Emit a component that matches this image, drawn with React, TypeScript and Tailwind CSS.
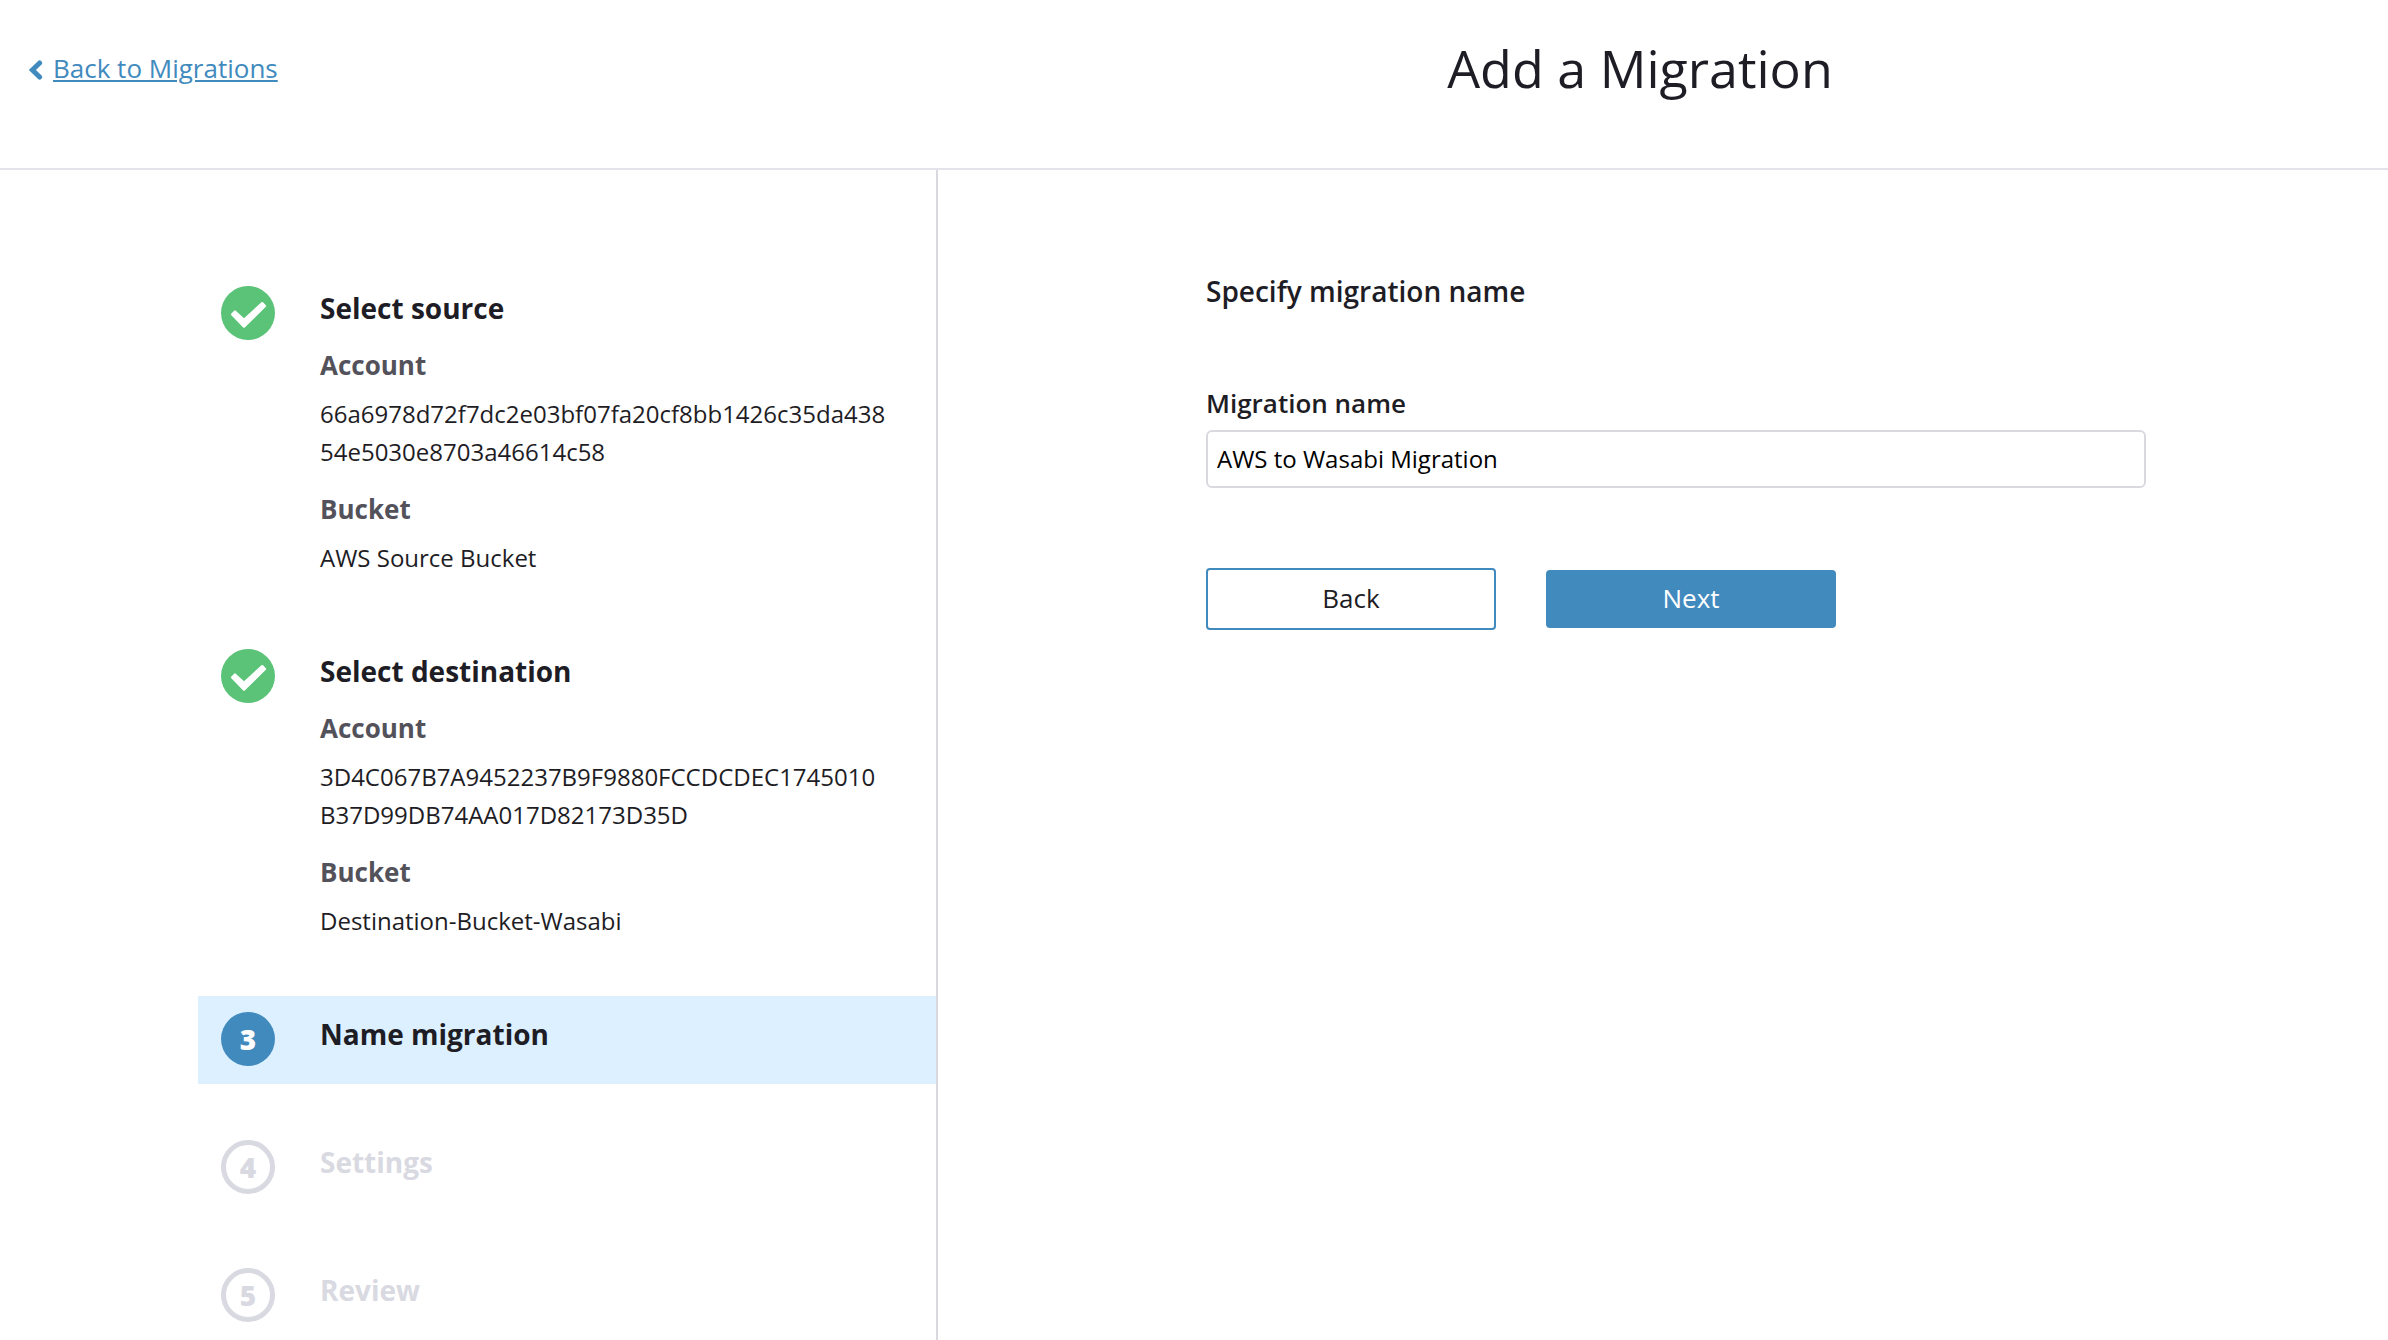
import React, { useState } from 'react';

interface Detail {
  label: string;
  value: string;
}

interface Step {
  number: number;
  title: string;
  status: 'done' | 'current' | 'upcoming';
  details?: Detail[];
}

const steps: Step[] = [
  {
    number: 1,
    title: 'Select source',
    status: 'done',
    details: [
      { label: 'Account', value: '66a6978d72f7dc2e03bf07fa20cf8bb1426c35da43854e5030e8703a46614c58' },
      { label: 'Bucket', value: 'AWS Source Bucket' }
    ]
  },
  {
    number: 2,
    title: 'Select destination',
    status: 'done',
    details: [
      { label: 'Account', value: '3D4C067B7A9452237B9F9880FCCDCDEC1745010B37D99DB74AA017D82173D35D' },
      { label: 'Bucket', value: 'Destination-Bucket-Wasabi' }
    ]
  },
  { number: 3, title: 'Name migration', status: 'current' },
  { number: 4, title: 'Settings', status: 'upcoming' },
  { number: 5, title: 'Review', status: 'upcoming' }
];

const badgeStyles = {
  done: 'bg-[#5bc378] text-white',
  current: 'bg-[#418abe] text-white',
  upcoming: 'border-[5px] border-[#d9d9e2] text-[#d9d9e2]'
};

const StepBadge: React.FC<{ step: Step }> = ({ step }) => (
  <div
    className={`flex h-[54px] w-[54px] shrink-0 items-center justify-center rounded-full text-[28px] leading-none font-extrabold ${badgeStyles[step.status]}`}
  >
    {step.status === 'done' ? (
      <svg viewBox="0 0 54 54" className="h-full w-full" fill="currentColor" aria-label="Completed">
        <path
          d="M11.2 28.4 L14 25.6 L23 33.9 L41.2 17.2 L44 20 L23 40.6 Z"
          stroke="currentColor"
          strokeWidth="2.4"
          strokeLinejoin="round"
        />
      </svg>
    ) : (
      step.number
    )}
  </div>
);

const StepItem: React.FC<{ step: Step }> = ({ step }) => (
  <li
    className={`flex min-h-[88px] gap-[45px] pt-4 pr-12 pl-[23px] ${step.status === 'current' ? 'bg-[#dcf0ff]' : ''}`}
  >
    <StepBadge step={step} />
    <div className="min-w-0 flex-1">
      <h2
        className={`text-[28px] leading-[44px] font-bold ${step.status === 'upcoming' ? 'text-[#d9d9e2]' : ''}`}
      >
        {step.title}
      </h2>
      {step.details && (
        <dl className="flex flex-col gap-[19px] pt-4 pb-4">
          {step.details.map(detail => (
            <div key={detail.label}>
              <dt className="text-[26px] leading-[38px] font-bold text-[#53525b]">{detail.label}</dt>
              <dd className="mt-[11px] text-[24px] leading-[38px] break-all">{detail.value}</dd>
            </div>
          ))}
        </dl>
      )}
    </div>
  </li>
);

export default function App() {
  const [name, setName] = useState('AWS to Wasabi Migration');

  const handleSubmit = (e: React.FormEvent) => {
    e.preventDefault();
  };

  return (
    <div className="flex min-h-screen flex-col bg-white font-['Open_Sans',sans-serif] text-[#1e1d25]">
      <header className="grid grid-cols-[892fr_1496fr] items-center border-b-2 border-[#e4e3eb] pt-8 pb-16">
        <div className="pl-7">
          <a href="#migrations" className="inline-flex items-center gap-2 text-[26px] leading-[38px] text-[#418abe]">
            <svg viewBox="0 0 17 20" className="mt-1 h-5 w-[17px]" fill="none" aria-hidden="true">
              <path
                d="M11.6 3 L4.4 10 L11.6 17"
                stroke="currentColor"
                strokeWidth="5"
                strokeLinecap="round"
                strokeLinejoin="miter"
              />
            </svg>
            <span className="underline">Back to Migrations</span>
          </a>
        </div>
        <h1 className="text-center text-[52px] leading-[72px]">Add a Migration</h1>
      </header>

      <div className="grid flex-1 grid-cols-[938fr_1450fr]">
        <aside className="border-r-2 border-[#d9d9e0] pt-[100px] pl-[198px]">
          <ol className="flex flex-col gap-10">
            {steps.map(step => (
              <StepItem key={step.number} step={step} />
            ))}
          </ol>
        </aside>

        <main className="px-[242px] pt-[100px]">
          <form onSubmit={handleSubmit} className="ml-[26px]">
            <h2 className="text-[28px] leading-[42px] font-semibold">Specify migration name</h2>
            <label htmlFor="migration-name" className="mt-[72px] block text-[26px] leading-[38px] font-semibold">
              Migration name
            </label>
            <input
              id="migration-name"
              type="text"
              className="mt-2 block h-[58px] w-full rounded-md border-2 border-[#d9d9e0] px-[9px] pb-0.5 text-[24px] text-black"
              value={name}
              onChange={e => setName(e.target.value)}
            />
            <div className="mt-20 flex items-center gap-[50px]">
              <button
                type="button"
                className="h-[62px] w-[290px] rounded border-2 border-[#418abe] bg-white pb-0.5 text-[26px]"
              >
                Back
              </button>
              <button type="submit" className="h-[58px] w-[290px] rounded bg-[#418abe] pb-0.5 text-[26px] text-white">
                Next
              </button>
            </div>
          </form>
        </main>
      </div>
    </div>
  );
}
